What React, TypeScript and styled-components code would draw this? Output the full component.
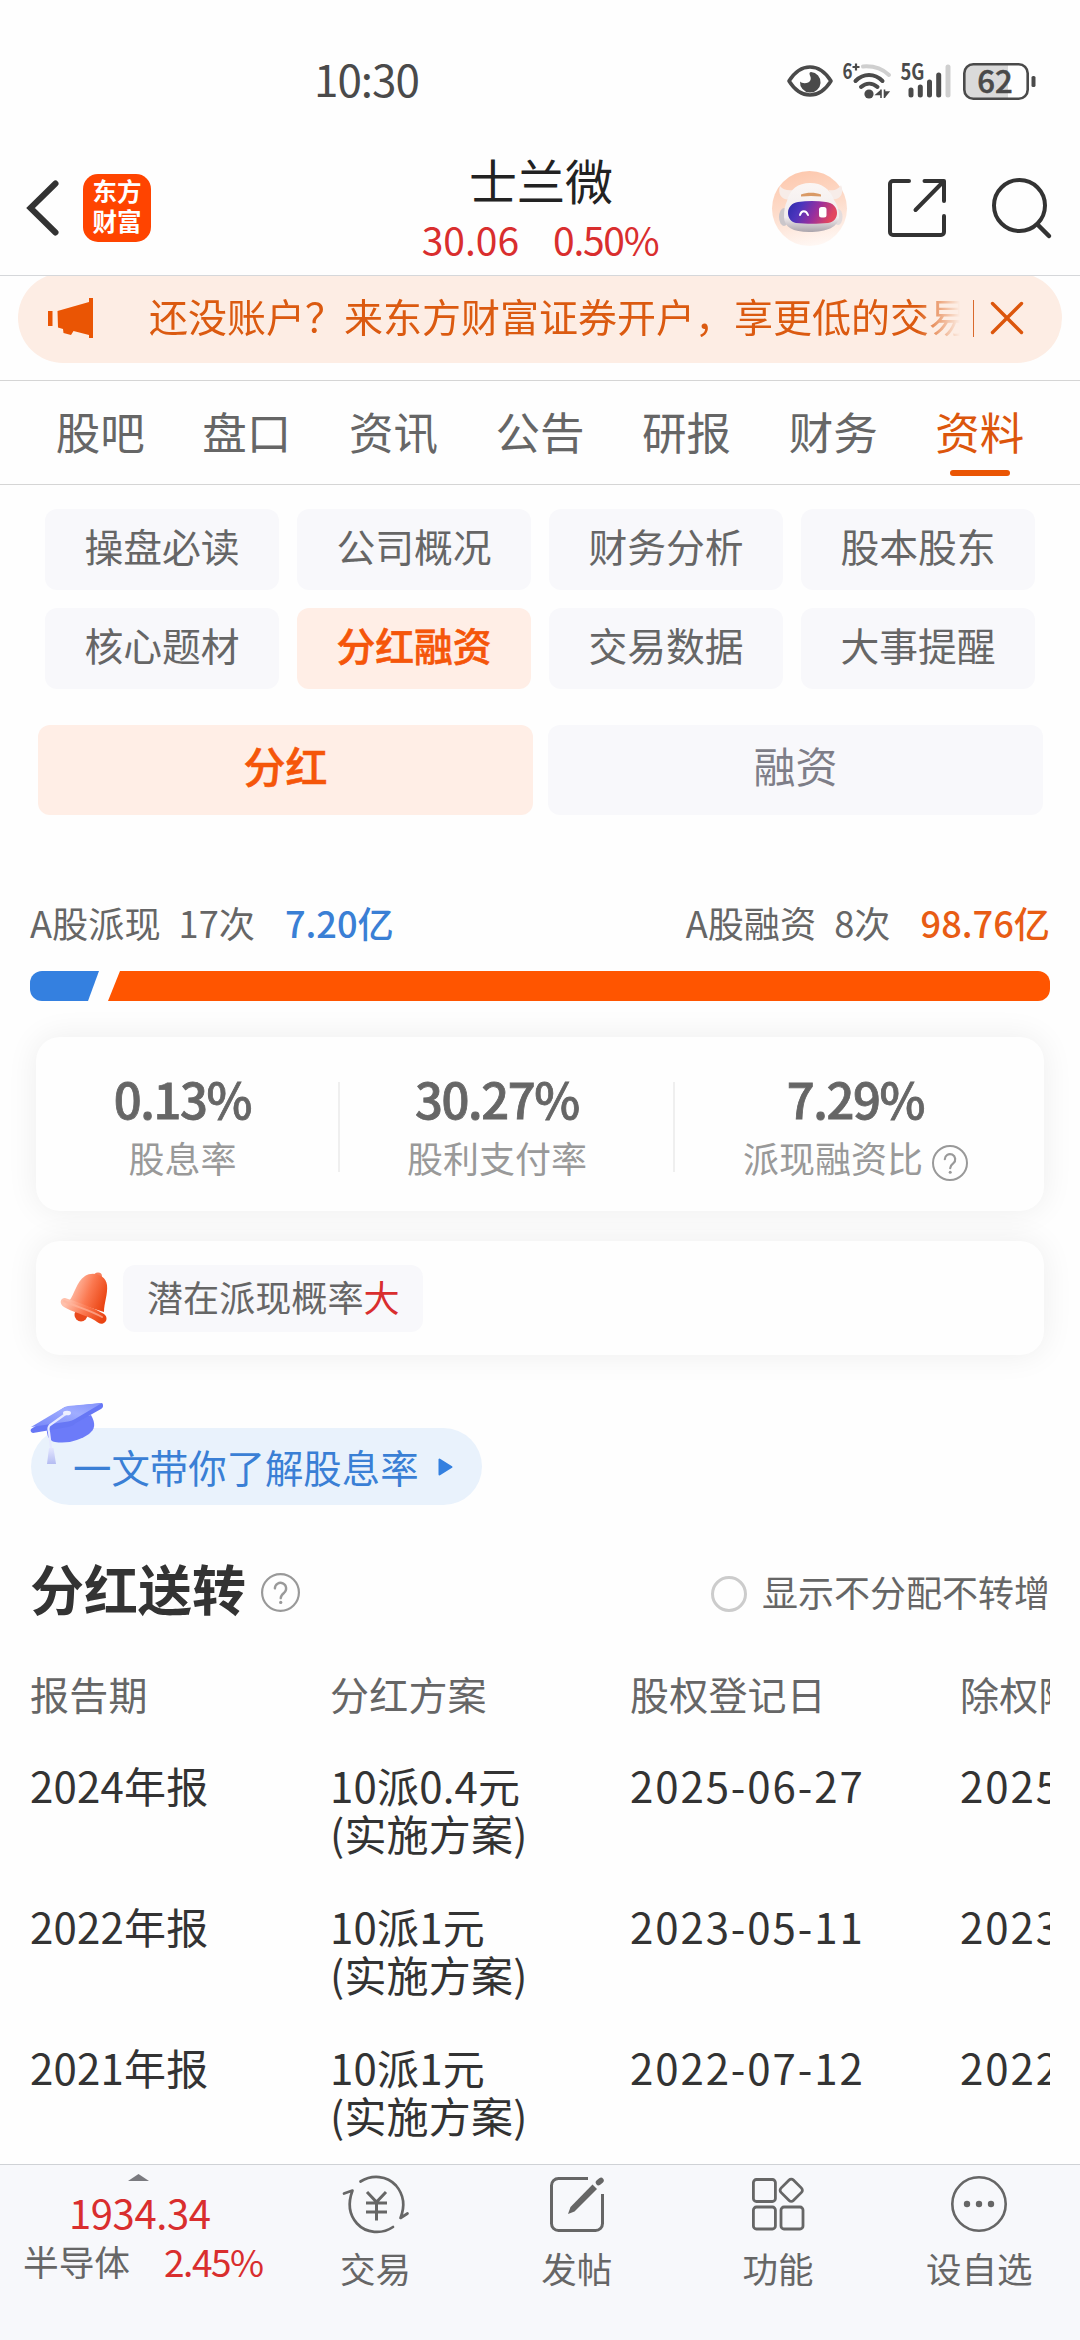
import React from "react";
import styled, { createGlobalStyle } from "styled-components";

const ORANGE = "#ea5504";
const RED = "#d92e2e";
const BLUE = "#3480e0";
const INK = "#333333";
const GREY = "#666666";
const PANEL = "#f8f8fb";

const GlobalStyle = createGlobalStyle`
  html, body { margin: 0; padding: 0; background: #fefefe; }
  * { box-sizing: border-box; }
  body {
    font-family: "Noto Sans CJK SC", "Noto Sans", sans-serif;
    color: ${INK};
  }
  svg { display: block; flex: none; overflow: visible; }
`;

const Page = styled.div`
  width: 1080px;
  height: 2340px;
  display: flex;
  flex-direction: column;
  overflow: hidden;
  background: #fefefe;
  white-space: nowrap;
`;

/* ---------- status bar ---------- */

const StatusBar = styled.div`
  height: 130px;
  flex: none;
  padding: 32px 44px 0 314px;
  display: flex;
  align-items: center;
  justify-content: space-between;
`;

const Clock = styled.span`
  font-size: 44px;
  line-height: 50px;
  letter-spacing: -1px;
  color: #4a4a4a;
  padding-bottom: 6px;
`;

const StatusIcons = styled.div`
  display: flex;
  align-items: center;
`;

/* ---------- header ---------- */

const Header = styled.header`
  height: 146px;
  flex: none;
  display: grid;
  grid-template-columns: 1fr auto 1fr;
  align-items: center;
  padding: 11px 29px 0;
  border-bottom: 1px solid #d5d7da;
`;

const HeaderLeft = styled.div`
  display: flex;
  align-items: center;
  gap: 25px;
  margin-left: -2px;
`;

const HeaderRight = styled.div`
  display: flex;
  align-items: center;
  justify-content: flex-end;
`;

const Logo = styled.div`
  width: 68px;
  height: 68px;
  border-radius: 15px;
  background: #ff4400;
  color: #fff;
  font-weight: 700;
  font-size: 24.5px;
  line-height: 30px;
  text-align: center;
  padding-top: 2px;
`;

const TitleBlock = styled.div`
  display: flex;
  flex-direction: column;
  align-items: center;
`;

const StockName = styled.div`
  font-size: 48px;
  line-height: 60px;
  padding-left: 2px;
  color: #222;
`;

const Quote = styled.div`
  display: flex;
  gap: 34px;
  font-size: 39px;
  line-height: 58px;
  padding-top: 1px;
  color: ${RED};
`;

const Percent = styled.span`
  letter-spacing: -1.3px;
`;

/* ---------- promo ---------- */

const PromoWrap = styled.div`
  height: 104px;
  flex: none;
  padding: 0 18px;
  overflow: hidden;
`;

const Promo = styled.div`
  height: 90px;
  margin-top: -3px;
  border-radius: 45px;
  background: #fdede4;
  display: flex;
  align-items: center;
  padding: 0 38px 0 30px;
`;

const PromoText = styled.div`
  margin-left: 56px;
  width: 811px;
  overflow: hidden;
  font-size: 39px;
  line-height: 60px;
  padding-bottom: 7px;
  color: #db5a10;
  mask-image: linear-gradient(to right, #000 768px, transparent 811px);
`;

const PromoDivider = styled.div`
  width: 1px;
  height: 37px;
  margin: 0 17px 0 13px;
  background: #d9692c;
`;

/* ---------- tabs ---------- */

const Tabs = styled.nav`
  height: 105px;
  flex: none;
  display: grid;
  grid-template-columns: repeat(7, 1fr);
  padding: 0 27px;
  border-top: 1px solid #d5d5d5;
  border-bottom: 1px solid #d5d5d5;
`;

const Tab = styled.div<{ $active?: boolean }>`
  display: flex;
  flex-direction: column;
  align-items: center;
  padding-top: 20px;
  font-size: 44.5px;
  line-height: 60px;
  color: ${(p) => (p.$active ? "#dc560c" : GREY)};
`;

const TabMark = styled.span`
  width: 60px;
  height: 6px;
  margin-top: 9px;
  border-radius: 3px;
  background: ${ORANGE};
`;

/* ---------- chips ---------- */

const ChipGrid = styled.div`
  flex: none;
  display: grid;
  grid-template-columns: repeat(4, 1fr);
  gap: 18px;
  padding: 24px 45px 0;
`;

const Chip = styled.div<{ $active?: boolean }>`
  height: 81px;
  border-radius: 12px;
  display: flex;
  align-items: center;
  justify-content: center;
  padding-bottom: 9px;
  font-size: 38.8px;
  color: ${(p) => (p.$active ? "#f5560a" : GREY)};
  font-weight: ${(p) => (p.$active ? 500 : 400)};
  -webkit-text-stroke: ${(p) => (p.$active ? "0.6px #f5560a" : "0")};
  background: ${(p) => (p.$active ? "#ffeee6" : PANEL)};
`;

const Segments = styled.div`
  flex: none;
  display: grid;
  grid-template-columns: 1fr 1fr;
  gap: 15px;
  padding: 0 37px 0 38px;
  margin-top: 36px;
`;

const Segment = styled.div<{ $active?: boolean }>`
  height: 90px;
  border-radius: 12px;
  display: flex;
  align-items: center;
  justify-content: center;
  padding-bottom: 11px;
  font-size: 42px;
  color: ${(p) => (p.$active ? "#f5560a" : "#7e7e88")};
  font-weight: ${(p) => (p.$active ? 500 : 400)};
  -webkit-text-stroke: ${(p) => (p.$active ? "0.6px #f5560a" : "0")};
  background: ${(p) => (p.$active ? "#ffeee6" : PANEL)};
`;

/* ---------- summary ---------- */

const Summary = styled.div`
  flex: none;
  display: flex;
  justify-content: space-between;
  padding: 0 30px;
  margin-top: 87px;
  font-size: 36.2px;
  line-height: 40px;
  color: ${GREY};
`;

const SummaryGroup = styled.div`
  display: flex;
`;

const SummaryCount = styled.span`
  margin-left: 18px;
`;

const SummaryAmount = styled.span<{ $color: string }>`
  margin-left: 30px;
  font-weight: 500;
  color: ${(p) => p.$color};
`;

const Ratio = styled.div`
  flex: none;
  height: 30px;
  margin: 29px 30px 0;
  display: flex;
`;

const RatioPaid = styled.div`
  width: 69px;
  border-radius: 12px 0 0 12px;
  background: ${BLUE};
  clip-path: polygon(0 0, 100% 0, 58px 100%, 0 100%);
`;

const RatioRaised = styled.div`
  flex: 1;
  margin-left: 9px;
  border-radius: 0 12px 12px 0;
  background: #ff5500;
  clip-path: polygon(12px 0, 100% 0, 100% 100%, 0 100%);
`;

const Card = styled.section`
  flex: none;
  margin: 0 36px;
  border-radius: 24px;
  background: #fefefe;
  box-shadow: 0 0 32px rgba(0, 0, 0, 0.07);
`;

const StatsCard = styled(Card)`
  height: 174px;
  margin-top: 36px;
  display: flex;
  align-items: center;
`;

const Stat = styled.div<{ $w: number; $inset: number }>`
  width: ${(p) => p.$w}px;
  height: 174px;
  display: flex;
  flex-direction: column;
  align-items: center;
  padding: 31px ${(p) => p.$inset}px 0 0;
`;

const StatValue = styled.div`
  font-size: 49px;
  line-height: 60px;
  font-weight: 500;
  letter-spacing: -1.4px;
  color: ${GREY};
  -webkit-text-stroke: 0.8px ${GREY};
`;

const StatLabel = styled.div`
  display: flex;
  align-items: center;
  gap: 9px;
  height: 40px;
  font-size: 36px;
  line-height: 40px;
  margin-top: 9px;
  color: #999;
`;

const LabelIcon = styled.span`
  padding-top: 11px;
`;

const StatRule = styled.div`
  width: 2px;
  height: 90px;
  margin-top: 6px;
  background: #efefef;
`;

const NoticeCard = styled(Card)`
  height: 114px;
  margin-top: 30px;
  display: flex;
  align-items: center;
  padding-left: 24px;
  position: relative;
`;

const NoticeTag = styled.div`
  height: 67px;
  margin-left: 15px;
  padding: 0 23px 5px 24px;
  border-radius: 12px;
  background: ${PANEL};
  display: flex;
  align-items: center;
  font-size: 36.1px;
  color: ${GREY};
`;

const Strong = styled.span`
  color: ${RED};
`;

/* ---------- article link ---------- */

const GuideLink = styled.div`
  flex: none;
  align-self: flex-start;
  position: relative;
  height: 77px;
  width: 451px;
  margin: 73px 0 0 31px;
  padding: 0 29px 0 42px;
  border-radius: 39px;
  background: #e9f2fc;
  display: flex;
  align-items: center;
  justify-content: space-between;
  font-size: 38.4px;
  color: #3a7fd5;
`;

const GuideText = styled.span`
  line-height: 56px;
  padding-bottom: 1px;
`;

const CapBadge = styled.span`
  position: absolute;
  left: -1px;
  top: -25px;
`;

/* ---------- dividend table ---------- */

const SectionHead = styled.div`
  flex: none;
  display: flex;
  align-items: center;
  justify-content: space-between;
  height: 80px;
  margin-top: 47px;
  padding: 0 30px;
`;

const SectionTitle = styled.h2`
  margin: 0;
  display: flex;
  align-items: center;
  gap: 15px;
  font-size: 54px;
  line-height: 80px;
  font-weight: 700;
`;

const HeadText = styled.span`
  padding-bottom: 8px;
`;

const Toggle = styled.label`
  display: flex;
  align-items: center;
  gap: 15px;
  font-size: 36px;
  color: ${GREY};
  padding-top: 4px;
`;

const ToggleText = styled.span`
  line-height: 40px;
  padding-bottom: 7px;
`;

const Radio = styled.span`
  width: 36px;
  height: 36px;
  border-radius: 50%;
  border: 3px solid #ccc;
`;

const Table = styled.div`
  flex: none;
  margin: 27px 30px 0;
  padding: 10px 0;
  overflow: hidden;
`;

const Row = styled.div<{ $head?: boolean }>`
  width: 1260px;
  height: ${(p) => (p.$head ? 92 : 141)}px;
  display: grid;
  grid-template-columns: 300px 300px 330px 330px;
  font-size: ${(p) => (p.$head ? 39 : 42)}px;
  line-height: 48px;
  color: ${(p) => (p.$head ? GREY : INK)};

  &:last-child {
    height: 98px;
  }
`;

const Cell = styled.div<{ $date?: boolean }>`
  letter-spacing: ${(p) => (p.$date ? "1.9px" : "0.2px")};
`;

/* ---------- bottom bar ---------- */

const BottomBar = styled.footer`
  height: 176px;
  flex: none;
  margin-top: auto;
  display: flex;
  background: #f7f8fb;
  border-top: 1px solid #cfd2d6;
`;

const IndexPanel = styled.div`
  width: 275px;
  padding: 9px 0 0 23px;
  display: flex;
  flex-direction: column;
`;

const IndexArrow = styled.div`
  margin-left: 105px;
`;

const IndexValue = styled.div`
  margin: 4px 0 0 46px;
  font-size: 40px;
  line-height: 54px;
  letter-spacing: -0.4px;
  color: ${RED};
`;

const IndexRow = styled.div`
  display: flex;
  align-items: center;
  gap: 34px;
  font-size: 35.7px;
  line-height: 44px;
  color: ${GREY};
`;

const Change = styled.span`
  color: ${RED};
  font-size: 37px;
  letter-spacing: -1.5px;
`;

const Action = styled.div`
  flex: 1;
  display: flex;
  flex-direction: column;
  align-items: center;
  padding-top: 11px;
  font-size: 35.5px;
  line-height: 48px;
  color: ${GREY};
`;

const ActionIcon = styled.span`
  height: 56px;
  display: flex;
  align-items: center;
`;

const ActionLabel = styled.span`
  margin-top: 12px;
`;

const Spacer = styled.span<{ $w: number }>`
  width: ${(p) => p.$w}px;
  flex: none;
`;

/* ---------- icons ---------- */

const EyeIcon = () => (
  <svg width="46" height="32" viewBox="0 0 46 32">
    <path d="M2 16C8 6.500 15 2 23 2s15 4.500 21 14c-6 9.500-13 14-21 14S8 25.500 2 16z" fill="none" stroke="#4a4a4a" strokeWidth="3.600" strokeLinejoin="round" />
    <path d="M24 7a10.300 10.300 0 1 1-11 9.500c2 2.500 9 2.500 10.500-1.500 1-3-1-4.500-1-6.500 0-.7.600-1.300 1.500-1.500z" fill="#4a4a4a" />
  </svg>
);

const WifiIcon = () => (
  <svg width="48" height="38" viewBox="0 0 48 38">
    <text x="-0.500" y="17" fontSize="21" fontWeight="700" fill="#4a4a4a" textLength="10" lengthAdjust="spacingAndGlyphs">6</text>
    <path d="M9.500 5h7M13 1.500v7" stroke="#4a4a4a" strokeWidth="2.200" />
    <path d="M20 4.500c10-.8 19 2 26 8.500" fill="none" stroke="#cfcfcf" strokeWidth="4" strokeLinecap="round" />
    <path d="M12.500 19c8-8 19-8 27 0" fill="none" stroke="#4a4a4a" strokeWidth="4" strokeLinecap="round" />
    <path d="M18 25c5-4.500 11.500-4.500 16.500 0" fill="none" stroke="#4a4a4a" strokeWidth="4" strokeLinecap="round" />
    <circle cx="26" cy="32" r="4.600" fill="#4a4a4a" />
    <path d="M38 27.500v8.500M38 28.500l-4.500 4h4.500M41.500 27.500v8.500M41.500 35l4-5h-4" fill="#4a4a4a" stroke="#4a4a4a" strokeWidth="1.600" />
  </svg>
);

const SignalIcon = () => (
  <svg width="50" height="36" viewBox="0 0 50 36">
    <text x="-0.500" y="17" fontSize="22" fontWeight="700" fill="#4a4a4a" textLength="24" lengthAdjust="spacingAndGlyphs">5G</text>
    <g strokeWidth="5" strokeLinecap="round" stroke="#4a4a4a">
      <path d="M10 27v5M19.300 24v8M28.500 19v13M37.700 12v20" />
      <path d="M47 4v28" stroke="#cfcfcf" />
    </g>
  </svg>
);

const BatteryIcon = () => (
  <svg width="73" height="37" viewBox="0 0 73 37">
    <path d="M10 2h35v33H10a8 8 0 0 1-8-8V10a8 8 0 0 1 8-8z" fill="#dadada" />
    <rect x="1.300" y="1.300" width="63.400" height="34.400" rx="9" fill="none" stroke="#4a4a4a" strokeWidth="2.600" />
    <rect x="68.500" y="13" width="4" height="11" rx="1.600" fill="#4a4a4a" />
    <text x="32" y="30" fontSize="31" fontWeight="500" fill="#4a4a4a" stroke="#4a4a4a" strokeWidth="0.600" textAnchor="middle">62</text>
  </svg>
);

const BackIcon = () => (
  <svg width="31" height="56" viewBox="0 0 31 56">
    <path d="M28.500 3.500L3.500 28l25 24.500" fill="none" stroke={INK} strokeWidth="6" strokeLinecap="round" strokeLinejoin="miter" />
  </svg>
);

const RobotAvatar = () => (
  <svg width="75" height="75" viewBox="0 0 75 75">
    <defs>
      <linearGradient id="halo" x1="0.300" y1="0" x2="0.500" y2="1">
        <stop offset="0" stopColor="#fdc8ad" />
        <stop offset="0.500" stopColor="#fddccb" />
        <stop offset="1" stopColor="#fff7f3" />
      </linearGradient>
      <linearGradient id="visor" x1="0" y1="0" x2="1" y2="0.250">
        <stop offset="0" stopColor="#2c2aa8" />
        <stop offset="0.300" stopColor="#4b35bd" />
        <stop offset="0.650" stopColor="#9a2f9c" />
        <stop offset="1" stopColor="#e2465f" />
      </linearGradient>
      <linearGradient id="helmet" x1="0" y1="0" x2="0" y2="1">
        <stop offset="0" stopColor="#fbf6f4" />
        <stop offset="0.700" stopColor="#f1eced" />
        <stop offset="1" stopColor="#aaa4ac" />
      </linearGradient>
    </defs>
    <circle cx="37.500" cy="37.500" r="37.500" fill="url(#halo)" />
    <path d="M19 28C11 30 5 24 8 15c3 4 8 5 14 4zM59 28c8 2 14-5 10-14-2 4-7 6-12 5z" fill="#f7ece8" />
    <ellipse cx="12" cy="46" rx="5" ry="9" fill="#cbc6ca" />
    <ellipse cx="66" cy="46" rx="4.500" ry="8" fill="#e3dcdd" />
    <path d="M38 12c12 0 20 6 24 17 3 4 5 10 5 16 0 11-12 16-30 16-16 0-25-5-25-15 0-7 1-12 3-16 3-12 11-18 23-18z" fill="url(#helmet)" />
    <path d="M29 23.500c6-2.500 14-2.500 20 0v2c-7-.8-13-.8-20 0z" fill="#d99a66" />
    <path d="M26 31c9-1.500 19-1.500 28 0 7 1 11 5 11 11 0 5-3 9-9 10-10 1-22 1-32 0-5-1-8-5-8-10 0-6 4-10 10-11z" fill="url(#visor)" />
    <path d="M28 44c1.500-5 6-5 8 0" fill="none" stroke="#fff" strokeWidth="2" strokeLinecap="round" />
    <rect x="47" y="36" width="7.500" height="10.500" rx="2.500" fill="#fff" />
  </svg>
);

const ShareIcon = () => (
  <svg width="58" height="58" viewBox="0 0 58 58">
    <g fill="none" stroke={INK} strokeWidth="4" strokeLinecap="round" strokeLinejoin="round">
      <path d="M21 2H5a3 3 0 0 0-3 3v48a3 3 0 0 0 3 3h48a3 3 0 0 0 3-3V37" />
      <path d="M36.500 2H56v20M55 3L27.500 31" />
    </g>
  </svg>
);

const SearchIcon = () => (
  <svg width="59" height="60" viewBox="0 0 59 60">
    <circle cx="27.500" cy="27.500" r="25.500" fill="none" stroke={INK} strokeWidth="4" />
    <path d="M46 47l11 11" stroke={INK} strokeWidth="4.500" strokeLinecap="round" />
  </svg>
);

const HornIcon = () => (
  <svg width="45" height="40" viewBox="0 0 45 40">
    <path d="M0 13h4.500v15H0zM9.500 13L41 4V0h4v40h-4v-3l-15.500-4-2.500 4-7.500-2-.5-4-5-1.500z" fill={ORANGE} />
  </svg>
);

const CloseIcon = () => (
  <svg width="32" height="32" viewBox="0 0 32 32">
    <path d="M1.500 1.500l29 29M30.500 1.500l-29 29" stroke="#dc560c" strokeWidth="3.400" strokeLinecap="round" />
  </svg>
);

const HelpIcon = ({ size }: { size: number }) => (
  <svg width={size} height={size} viewBox="0 0 36 36">
    <circle cx="18" cy="18" r="17" fill="none" stroke="#999" strokeWidth="2" />
    <path d="M12.800 14.200a5.200 5.200 0 1 1 8.600 4c-2 1.600-3.200 2.600-3.200 5" fill="none" stroke="#999" strokeWidth="2.200" strokeLinecap="round" />
    <circle cx="18.200" cy="27.200" r="1.500" fill="#999" />
  </svg>
);

const BellIcon = () => (
  <svg width="48" height="52" viewBox="0 0 48 52">
    <defs>
      <linearGradient id="bell" x1="0" y1="0.200" x2="1" y2="0.600">
        <stop offset="0.100" stopColor="#ffc0ab" />
        <stop offset="0.550" stopColor="#fb7850" />
        <stop offset="1" stopColor="#ea4412" />
      </linearGradient>
    </defs>
    <circle cx="38" cy="4.500" r="4" fill="#f7805e" />
    <circle cx="21" cy="43" r="6.500" fill="#e9491c" />
    <path d="M25 4c8-5 21-1 22 9 1 9-3 18-3 27L9 29c6-7 7-19 16-25z" fill="url(#bell)" />
    <path d="M5 26c13 4 27 9 39 16 4 3 3 8-1 9.500-3 1-5-1-8-3C26 43 12 40 4 35c-5-3-4-9 1-9z" fill="url(#bell)" />
    <path d="M4 29c12 6 24 8 38 16" fill="none" stroke="#ffb49b" strokeWidth="2" strokeLinecap="round" opacity="0.700" />
  </svg>
);

const CapIcon = () => (
  <svg width="74" height="62" viewBox="0 0 74 62">
    <defs>
      <linearGradient id="capTop" x1="0" y1="1" x2="1" y2="0">
        <stop offset="0" stopColor="#7585f8" />
        <stop offset="0.600" stopColor="#a0adff" />
        <stop offset="1" stopColor="#8391fb" />
      </linearGradient>
      <linearGradient id="tassel" x1="0" y1="0" x2="0" y2="1">
        <stop offset="0" stopColor="#e3e6ff" />
        <stop offset="1" stopColor="#b4bcf2" />
      </linearGradient>
    </defs>
    <path d="M17 24l44-12c5 9 4 14-2 19-9 6-20 10-34 8-6-1-9-7-8-15z" fill="#6c7bf9" />
    <path d="M1 26L35 4 72 0c2 2 1 5-1 6L46 20c-2 2-4 3-8 4L3 30c-2-.5-3-2-2-4z" fill="#6777f5" />
    <path d="M1 24L33 5c2-1 3-1.500 5-2L72 0 45 16c-2 1-4 2-7 2.500z" fill="url(#capTop)" />
    <path d="M37 10L20 22c-2 2-2 4-1 7l2 16" fill="none" stroke="#e6e9ff" strokeWidth="2.200" strokeLinecap="round" />
    <ellipse cx="37" cy="10" rx="4" ry="2.300" fill="#eef0ff" />
    <path d="M19 45h4.500L26 61h-9z" fill="url(#tassel)" />
  </svg>
);

const PlayIcon = () => (
  <svg width="15" height="18" viewBox="0 0 15 18">
    <path d="M1.500 1.500v15L13.500 9z" fill={BLUE} stroke={BLUE} strokeWidth="2" strokeLinejoin="round" />
  </svg>
);

const TradeIcon = () => (
  <svg width="66" height="58" viewBox="0 0 66 58">
    <g fill="none" stroke={GREY} strokeWidth="2.700" strokeLinecap="round" strokeLinejoin="round">
      <path d="M17.500 6.500C29-.5 44 .5 53 10.500c8 9.500 9 21 4.500 32.500l7-4.500" />
      <path d="M50 52C39 59.500 23 58.500 14 48.500 5.500 39 5 27.500 9.500 15.500l-8.500 3" />
    </g>
    <path d="M24 17l9.500 10L43 17M23 28h21M23 37h21M33.500 27v18.500" fill="none" stroke={GREY} strokeWidth="3" />
  </svg>
);

const PostIcon = () => (
  <svg width="54" height="55" viewBox="0 0 54 55">
    <path d="M38 1.500H8.500a7 7 0 0 0-7 7v38a7 7 0 0 0 7 7h37a7 7 0 0 0 7-7V17" fill="none" stroke={GREY} strokeWidth="3" />
    <path d="M42.500 7.500l4.500 4.500L24.500 34.500 18 37l2.500-7z" fill={GREY} />
    <path d="M48.500 5.500l2.500-2" stroke={GREY} strokeWidth="5.500" strokeLinecap="round" />
  </svg>
);

const GridIcon = () => (
  <svg width="52" height="54" viewBox="0 0 52 54">
    <g fill="none" stroke={GREY} strokeWidth="2.800">
      <rect x="1.400" y="2.500" width="22" height="22" rx="3" />
      <rect x="1.400" y="30" width="22" height="22" rx="3" />
      <rect x="29" y="30" width="22" height="22" rx="3" />
      <rect x="30.500" y="4.500" width="17.500" height="17.500" rx="3" transform="rotate(45 39.250 13.250)" />
    </g>
  </svg>
);

const MoreIcon = () => (
  <svg width="56" height="56" viewBox="0 0 56 56">
    <circle cx="28" cy="28" r="26.700" fill="none" stroke={GREY} strokeWidth="2.600" />
    <g fill={GREY}>
      <circle cx="16" cy="28" r="3.200" />
      <circle cx="28" cy="28" r="3.200" />
      <circle cx="40" cy="28" r="3.200" />
    </g>
  </svg>
);

/* ---------- data ---------- */

const tabs = ["股吧", "盘口", "资讯", "公告", "研报", "财务", "资料"];
const chips = ["操盘必读", "公司概况", "财务分析", "股本股东", "核心题材", "分红融资", "交易数据", "大事提醒"];
const rows = [
  { year: "2024年报", plan: "10派0.4元", record: "2025-06-27", ex: "2025-06-30" },
  { year: "2022年报", plan: "10派1元", record: "2023-05-11", ex: "2023-05-12" },
  { year: "2021年报", plan: "10派1元", record: "2022-07-12", ex: "2022-07-13" },
];
const actions = [
  { label: "交易", icon: <TradeIcon /> },
  { label: "发帖", icon: <PostIcon /> },
  { label: "功能", icon: <GridIcon /> },
  { label: "设自选", icon: <MoreIcon /> },
];

export default function App() {
  return (
    <Page lang="zh-CN">
      <GlobalStyle />
      <StatusBar>
        <Clock>10:30</Clock>
        <StatusIcons>
          <EyeIcon />
          <Spacer $w={10} />
          <WifiIcon />
          <Spacer $w={10} />
          <SignalIcon />
          <Spacer $w={12} />
          <BatteryIcon />
        </StatusIcons>
      </StatusBar>

      <Header>
        <HeaderLeft>
          <BackIcon />
          <Logo>
            <div>东方</div>
            <div>财富</div>
          </Logo>
        </HeaderLeft>
        <TitleBlock>
          <StockName>士兰微</StockName>
          <Quote>
            <span>30.06</span>
            <Percent>0.50%</Percent>
          </Quote>
        </TitleBlock>
        <HeaderRight>
          <RobotAvatar />
          <Spacer $w={41} />
          <ShareIcon />
          <Spacer $w={46} />
          <SearchIcon />
        </HeaderRight>
      </Header>

      <PromoWrap>
        <Promo>
          <HornIcon />
          <PromoText>还没账户？来东方财富证券开户，享更低的交易</PromoText>
          <PromoDivider />
          <CloseIcon />
        </Promo>
      </PromoWrap>

      <Tabs>
        {tabs.map((t) => (
          <Tab key={t} $active={t === "资料"}>
            {t}
            {t === "资料" && <TabMark />}
          </Tab>
        ))}
      </Tabs>

      <ChipGrid>
        {chips.map((c) => (
          <Chip key={c} $active={c === "分红融资"}>{c}</Chip>
        ))}
      </ChipGrid>

      <Segments>
        <Segment $active>分红</Segment>
        <Segment>融资</Segment>
      </Segments>

      <Summary>
        <SummaryGroup>
          <span>A股派现</span>
          <SummaryCount>17次</SummaryCount>
          <SummaryAmount $color="#3a7fd5">7.20亿</SummaryAmount>
        </SummaryGroup>
        <SummaryGroup>
          <span>A股融资</span>
          <SummaryCount>8次</SummaryCount>
          <SummaryAmount $color="#e85c14">98.76亿</SummaryAmount>
        </SummaryGroup>
      </Summary>
      <Ratio>
        <RatioPaid />
        <RatioRaised />
      </Ratio>

      <StatsCard>
        <Stat $w={302} $inset={9}>
          <StatValue>0.13%</StatValue>
          <StatLabel>股息率</StatLabel>
        </Stat>
        <StatRule />
        <Stat $w={333} $inset={19}>
          <StatValue>30.27%</StatValue>
          <StatLabel>股利支付率</StatLabel>
        </Stat>
        <StatRule />
        <Stat $w={369} $inset={8}>
          <StatValue>7.29%</StatValue>
          <StatLabel>
            派现融资比
            <LabelIcon><HelpIcon size={36} /></LabelIcon>
          </StatLabel>
        </Stat>
      </StatsCard>

      <NoticeCard>
        <BellIcon />
        <NoticeTag>
          潜在派现概率<Strong>大</Strong>
        </NoticeTag>
      </NoticeCard>

      <GuideLink>
        <CapBadge><CapIcon /></CapBadge>
        <GuideText>一文带你了解股息率</GuideText>
        <PlayIcon />
      </GuideLink>

      <SectionHead>
        <SectionTitle>
          <HeadText>分红送转</HeadText>
          <HelpIcon size={39} />
        </SectionTitle>
        <Toggle>
          <Radio />
          <ToggleText>显示不分配不转增</ToggleText>
        </Toggle>
      </SectionHead>

      <Table>
        <Row $head>
          <Cell>报告期</Cell>
          <Cell>分红方案</Cell>
          <Cell>股权登记日</Cell>
          <Cell>除权除息日</Cell>
        </Row>
        {rows.map((r) => (
          <Row key={r.year}>
            <Cell>{r.year}</Cell>
            <Cell>
              <div>{r.plan}</div>
              <div>(实施方案)</div>
            </Cell>
            <Cell $date>{r.record}</Cell>
            <Cell $date>{r.ex}</Cell>
          </Row>
        ))}
      </Table>

      <BottomBar>
        <IndexPanel>
          <IndexArrow>
            <svg width="21" height="7" viewBox="0 0 21 7">
              <path d="M0 7L10.500 0 21 7z" fill="#7a7a7f" />
            </svg>
          </IndexArrow>
          <IndexValue>1934.34</IndexValue>
          <IndexRow>
            <span>半导体</span>
            <Change>2.45%</Change>
          </IndexRow>
        </IndexPanel>
        {actions.map((a) => (
          <Action key={a.label}>
            <ActionIcon>{a.icon}</ActionIcon>
            <ActionLabel>{a.label}</ActionLabel>
          </Action>
        ))}
      </BottomBar>
    </Page>
  );
}
